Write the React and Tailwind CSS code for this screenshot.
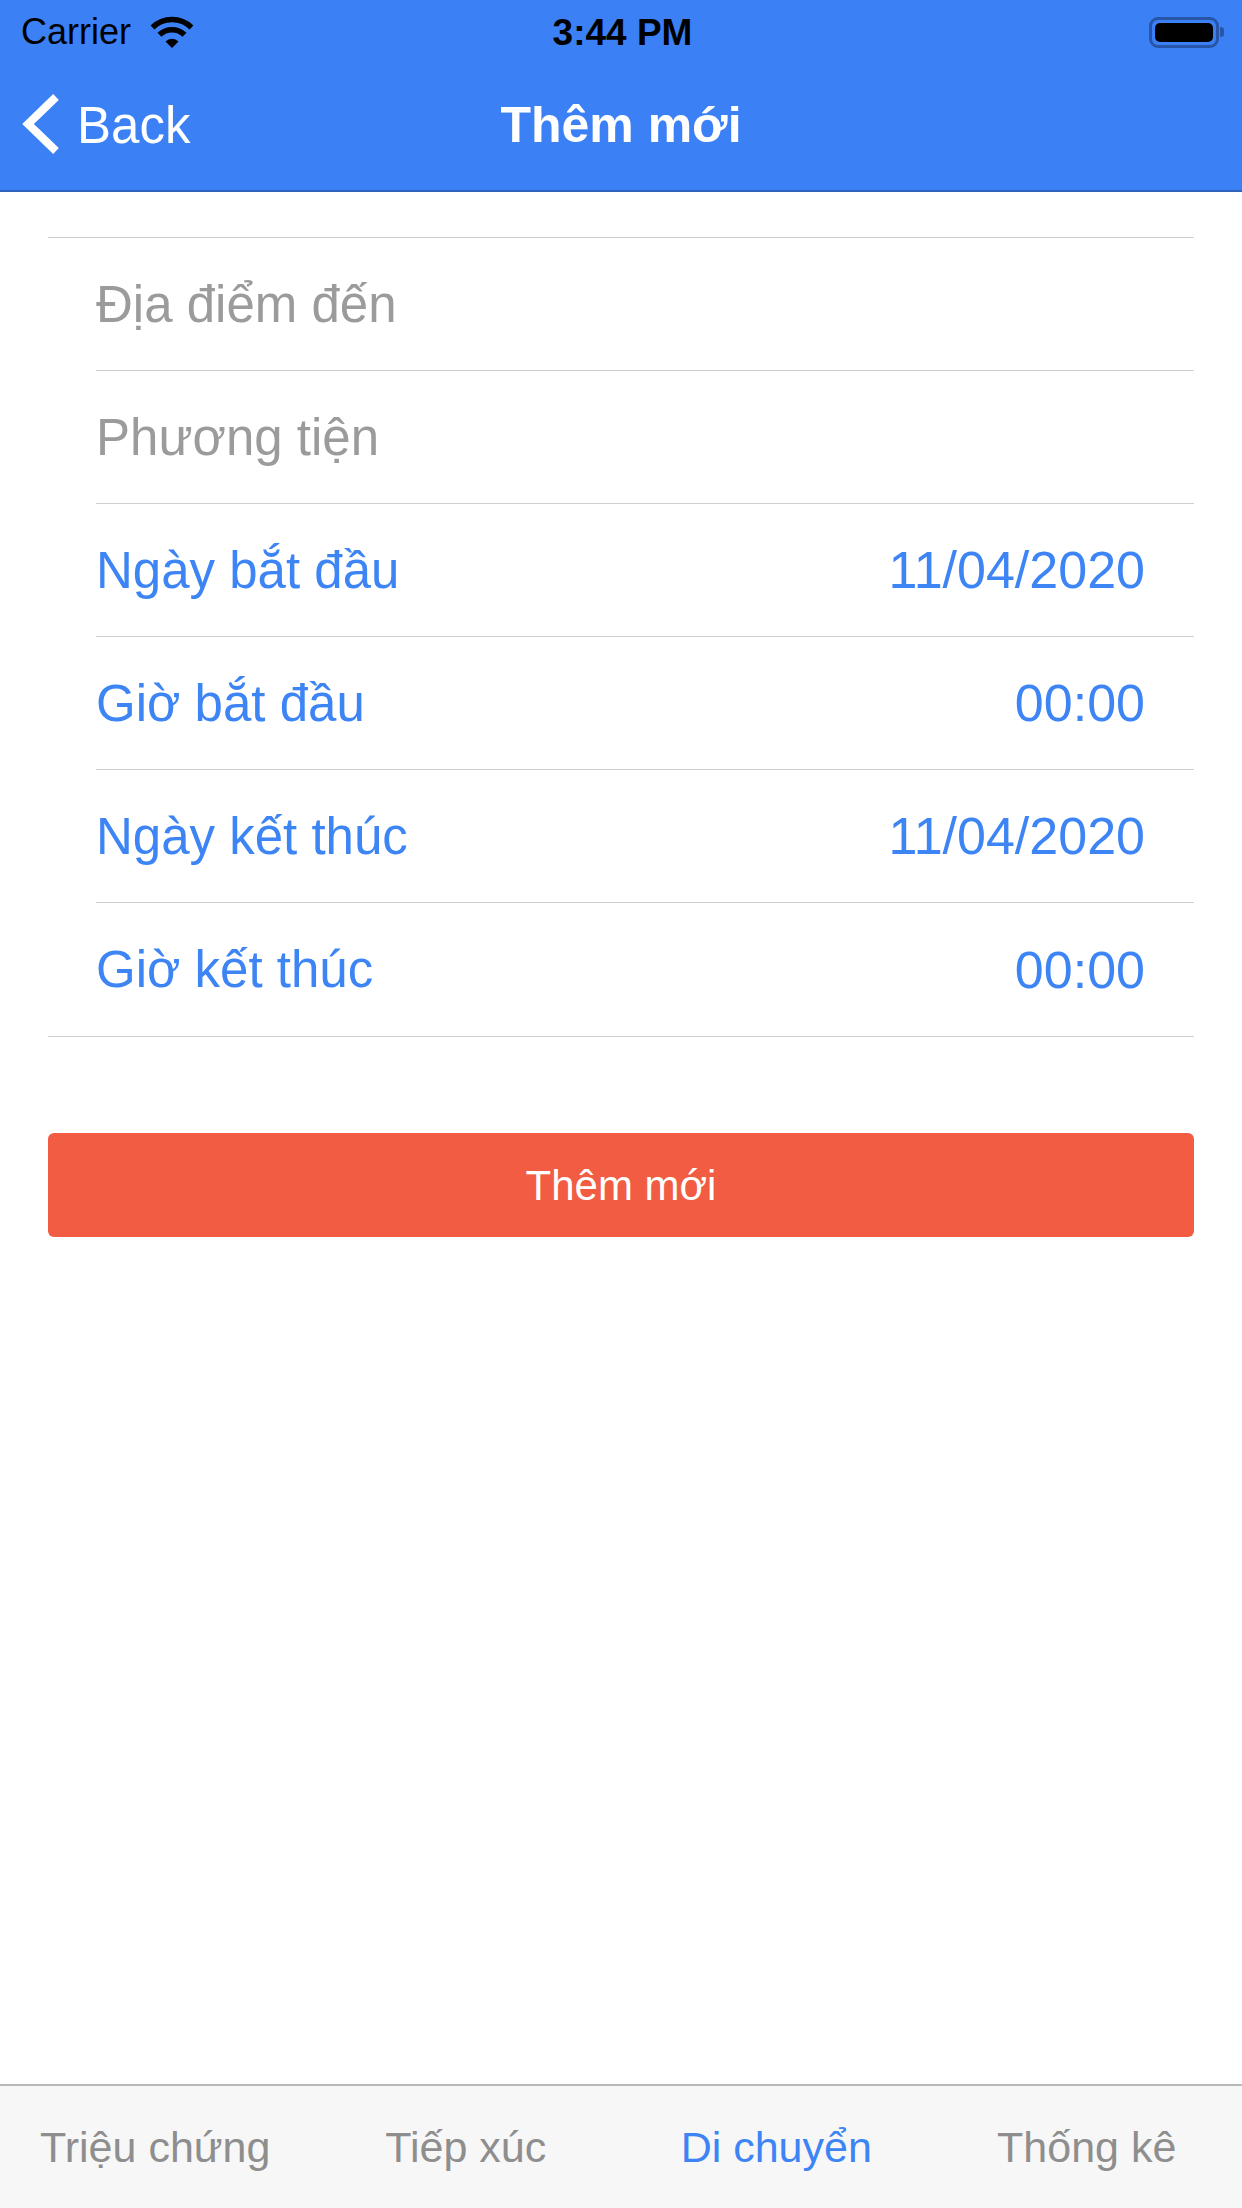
import React from "react";

const FONT = { fontFamily: '"Liberation Sans", Arial, sans-serif' };

function Wifi() {
  return (
    <svg width="46" height="33" viewBox="0 0 46 33">
      <path d="M3.5 11.5 A28 28 0 0 1 42.5 11.5" fill="none" stroke="#000" strokeWidth="5.5" />
      <path d="M10.5 18.8 A18 18 0 0 1 35.5 18.8" fill="none" stroke="#000" strokeWidth="5.5" />
      <path d="M23 32 L16.5 25.6 A9 9 0 0 1 29.5 25.6 Z" fill="#000" />
    </svg>
  );
}

function Battery() {
  return (
    <div className="flex items-center">
      <div className="w-[70px] h-[31px] rounded-[9px] border-[3px] border-[#2756a8] p-[3px] flex">
        <div className="flex-1 rounded-[5px] bg-black" />
      </div>
      <div className="w-[4px] h-[10px] rounded-r-[3px] bg-[#2756a8] ml-[1px]" />
    </div>
  );
}

function Chevron() {
  return (
    <svg width="40" height="64" viewBox="0 0 40 64">
      <path d="M34 4 L6 31 L34 58" fill="none" stroke="#fff" strokeWidth="8" strokeLinejoin="miter" />
    </svg>
  );
}

const rows = [
  { label: "Địa điểm đến", placeholder: true },
  { label: "Phương tiện", placeholder: true },
  { label: "Ngày bắt đầu", value: "11/04/2020" },
  { label: "Giờ bắt đầu", value: "00:00" },
  { label: "Ngày kết thúc", value: "11/04/2020" },
  { label: "Giờ kết thúc", value: "00:00" },
];

const tabs = [
  { label: "Triệu chứng" },
  { label: "Tiếp xúc" },
  { label: "Di chuyển", active: true },
  { label: "Thống kê" },
];

export default function App() {
  return (
    <div className="w-[1242px] min-h-[2208px] bg-white flex flex-col" style={FONT}>
      {/* header */}
      <div className="bg-[#3b81f5] border-b-[2px] border-[#2f63bd]">
        <div className="h-[60px] grid grid-cols-3 items-center pl-[21px] pr-[18px] pt-[4px]">
          <div className="flex items-center gap-[18px]">
            <span className="text-[36px] text-black leading-none">Carrier</span>
            <Wifi />
          </div>
          <div className="text-center text-[37px] font-bold text-black leading-none">3:44 PM</div>
          <div className="flex justify-end">
            <Battery />
          </div>
        </div>
        <div className="h-[130px] grid grid-cols-[1fr_auto_1fr] items-center">
          <div className="flex items-center pl-[22px] gap-[15px] text-white">
            <Chevron />
            <span className="text-[51px] leading-none">Back</span>
          </div>
          <div className="text-white text-[50px] font-bold leading-none">Thêm mới</div>
          <div />
        </div>
      </div>

      {/* form */}
      <div className="px-[48px] pt-[45px]">
        <div className="border-t border-b border-[#cfcfd2]">
          {rows.map((r, i) => (
            <div key={i} className="pl-[48px]">
              <div
                className={
                  "h-[133px] flex items-center justify-between pr-[49px] " +
                  (i < rows.length - 1 ? "border-b border-[#cfcfd2]" : "")
                }
              >
                <span
                  className={
                    "text-[51px] leading-none " +
                    (r.placeholder ? "text-[#9b9b9b]" : "text-[#3d84f5]")
                  }
                >
                  {r.label}
                </span>
                {r.value && (
                  <span className="text-[52px] leading-none text-[#3d84f5]">{r.value}</span>
                )}
              </div>
            </div>
          ))}
        </div>

        <button className="mt-[96px] w-full h-[104px] rounded-[6px] bg-[#f15c43] text-white text-[42px] flex items-center justify-center">
          Thêm mới
        </button>
      </div>

      <div className="flex-1" />

      {/* tab bar */}
      <div className="h-[124px] border-t-[2px] border-[#b8b8b8] bg-[#f7f7f7] grid grid-cols-4 items-center">
        {tabs.map((t, i) => (
          <div
            key={i}
            className={
              "text-center text-[43px] leading-none " +
              (t.active ? "text-[#3d84f5]" : "text-[#8e8e8e]")
            }
          >
            {t.label}
          </div>
        ))}
      </div>
    </div>
  );
}
